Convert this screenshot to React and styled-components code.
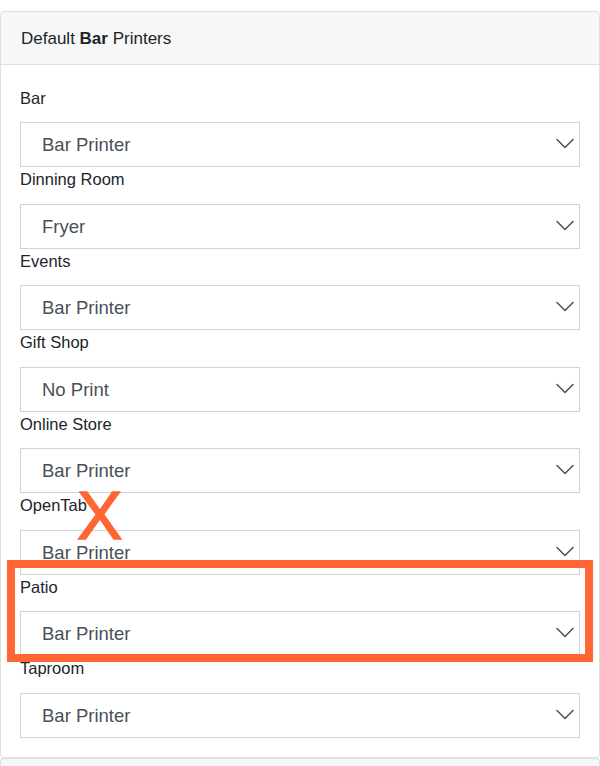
import React from "react";
import styled, { createGlobalStyle } from "styled-components";

const GlobalStyle = createGlobalStyle`
  html, body { margin: 0; padding: 0; background: #ffffff; }
  body { font-family: "Liberation Sans", Arial, Helvetica, sans-serif; }
  * { box-sizing: border-box; }
`;

const Page = styled.div`
  position: relative;
  width: 600px;
  padding-top: 11px;
`;

const Card = styled.section`
  background: #ffffff;
  border: 1px solid #dfdfdf;
  border-radius: 4px;
`;

const CardHeader = styled.header`
  background: #f7f7f7;
  border-bottom: 1px solid #dfdfdf;
  padding: 13.5px 20px 13px;
  font-size: 17px;
  line-height: 25.5px;
  color: #212529;
  border-radius: 4px 4px 0 0;
`;

const CardBody = styled.div`
  padding: 20.5px 19px 19.5px 19px;
  display: flex;
  flex-direction: column;
`;

const Group = styled.div`
  display: flex;
  flex-direction: column;
`;

const Label = styled.label`
  display: block;
  font-size: 16.5px;
  line-height: 24.5px;
  color: #212529;
  margin-bottom: 12px;
`;

const SelectWrap = styled.div`
  position: relative;
  height: 45px;
`;

const Select = styled.select`
  appearance: none;
  -webkit-appearance: none;
  width: 100%;
  height: 45px;
  border: 1px solid #ced4da;
  border-radius: 0;
  background: #ffffff;
  color: #495057;
  font-family: "Liberation Sans", Arial, Helvetica, sans-serif;
  font-size: 18.5px;
  padding: 0 40px 0 21px;
  outline: none;
`;

const Chevron = styled.svg`
  position: absolute;
  right: 6px;
  top: 16px;
  width: 18px;
  height: 11px;
  pointer-events: none;
`;

const NextCard = styled.section`
  height: 20px;
  background: #f7f7f7;
  border: 1px solid #dfdfdf;
  border-bottom: none;
  border-radius: 4px 4px 0 0;
`;

const Highlight = styled.div`
  position: absolute;
  left: 7px;
  top: 560px;
  width: 586px;
  height: 102px;
  border: 8px solid #ff6633;
  pointer-events: none;
`;

const Cross = styled.span`
  position: absolute;
  left: 77px;
  top: 481px;
  font-family: "Liberation Sans", Arial, sans-serif;
  font-size: 68px;
  line-height: 68px;
  color: #ff6633;
  -webkit-text-stroke: 1.5px #ff6633;
  pointer-events: none;
`;

const rooms = [
  ["Bar", "Bar Printer"],
  ["Dinning Room", "Fryer"],
  ["Events", "Bar Printer"],
  ["Gift Shop", "No Print"],
  ["Online Store", "Bar Printer"],
  ["OpenTab", "Bar Printer"],
  ["Patio", "Bar Printer"],
  ["Taproom", "Bar Printer"],
];

const options = ["Bar Printer", "Fryer", "No Print"];

export default function App() {
  return (
    <>
      <GlobalStyle />
      <Page>
        <Card>
          <CardHeader>
            Default <b>Bar</b> Printers
          </CardHeader>
          <CardBody>
            {rooms.map(([room, value], i) => (
              <Group key={room}>
                <Label htmlFor={`room-${i}`}>{room}</Label>
                <SelectWrap>
                  <Select id={`room-${i}`} defaultValue={value}>
                    {options.map((o) => (
                      <option key={o} value={o}>
                        {o}
                      </option>
                    ))}
                  </Select>
                  <Chevron viewBox="0 0 18 11" fill="none">
                    <polyline
                      points="1,1.5 9,9.5 17,1.5"
                      stroke="#495057"
                      strokeWidth="1.5"
                      strokeLinecap="round"
                      strokeLinejoin="round"
                    />
                  </Chevron>
                </SelectWrap>
              </Group>
            ))}
          </CardBody>
        </Card>
        <NextCard />
        <Cross>X</Cross>
        <Highlight />
      </Page>
    </>
  );
}
